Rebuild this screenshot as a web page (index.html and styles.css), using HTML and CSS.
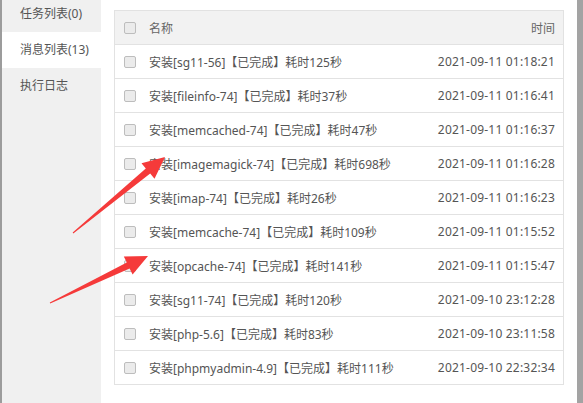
FILE: index.html
```html
<!DOCTYPE html>
<html lang="zh-CN">
<head>
<meta charset="utf-8">
<link rel="stylesheet" href="styles.css">
</head>
<body>
<div class="page">
  <div class="edge-left"></div>
  <nav class="sidebar">
    <ul class="menu">
      <li class="menu-item">任务列表(0)</li>
      <li class="menu-item active">消息列表(13)</li>
      <li class="menu-item">执行日志</li>
    </ul>
  </nav>
  <main class="main">
    <table class="msg-table">
      <thead>
        <tr><th class="c-check"><span class="cb"></span></th><th class="c-name">名称</th><th class="c-time">时间</th></tr>
      </thead>
      <tbody>
        <tr><td class="c-check"><span class="cb"></span></td><td class="c-name">安装[sg11-56]【已完成】耗时125秒</td><td class="c-time">2021-09-11 01:18:21</td></tr>
        <tr><td class="c-check"><span class="cb"></span></td><td class="c-name">安装[fileinfo-74]【已完成】耗时37秒</td><td class="c-time">2021-09-11 01:16:41</td></tr>
        <tr><td class="c-check"><span class="cb"></span></td><td class="c-name">安装[memcached-74]【已完成】耗时47秒</td><td class="c-time">2021-09-11 01:16:37</td></tr>
        <tr><td class="c-check"><span class="cb"></span></td><td class="c-name">安装[imagemagick-74]【已完成】耗时698秒</td><td class="c-time">2021-09-11 01:16:28</td></tr>
        <tr><td class="c-check"><span class="cb"></span></td><td class="c-name">安装[imap-74]【已完成】耗时26秒</td><td class="c-time">2021-09-11 01:16:23</td></tr>
        <tr><td class="c-check"><span class="cb"></span></td><td class="c-name">安装[memcache-74]【已完成】耗时109秒</td><td class="c-time">2021-09-11 01:15:52</td></tr>
        <tr><td class="c-check"><span class="cb"></span></td><td class="c-name">安装[opcache-74]【已完成】耗时141秒</td><td class="c-time">2021-09-11 01:15:47</td></tr>
        <tr><td class="c-check"><span class="cb"></span></td><td class="c-name">安装[sg11-74]【已完成】耗时120秒</td><td class="c-time">2021-09-10 23:12:28</td></tr>
        <tr><td class="c-check"><span class="cb"></span></td><td class="c-name">安装[php-5.6]【已完成】耗时83秒</td><td class="c-time">2021-09-10 23:11:58</td></tr>
        <tr><td class="c-check"><span class="cb"></span></td><td class="c-name">安装[phpmyadmin-4.9]【已完成】耗时111秒</td><td class="c-time">2021-09-10 22:32:34</td></tr>
      </tbody>
    </table>
  </main>
  <div class="edge-right"></div>
  <svg class="arrows" width="583" height="403" viewBox="0 0 583 403">
    <polygon points="72.7,232.6 145.8,168.4 141.5,163.2 165,157 154.5,178.8 150.2,173.6 73.3,233.4" />
    <polygon points="49.8,302.5 126.8,262.6 123.8,256.4 148,256 132.6,274.6 129.6,268.4 50.2,303.5" />
  </svg>
</div>
</body>
</html>
```
FILE: styles.css
```css
html, body {
  margin: 0;
  padding: 0;
  background: #fff;
}
body {
  font-family: "Noto Sans", "Noto Sans CJK SC", sans-serif;
  font-size: 12px;
  color: #555;
  overflow: hidden;
}
.page {
  position: relative;
  display: flex;
  width: 583px;
  height: 403px;
  overflow: hidden;
}
.edge-left {
  width: 2px;
  flex: none;
  background: #9c9c9c;
}
.sidebar {
  width: 99px;
  flex: none;
  background: #f0f0f0;
}
.menu {
  list-style: none;
  margin: -4px 0 0 0;
  padding: 0;
}
.menu-item {
  height: 36px;
  line-height: 36px;
  padding-left: 18px;
  color: #555;
  font-size: 12px;
}
.menu-item.active {
  background: #fff;
}
.main {
  flex: 1;
  padding: 10px 13px 0 13px;
}
.msg-table {
  width: 450px;
  border-collapse: collapse;
  table-layout: fixed;
}
.msg-table th,
.msg-table td {
  height: 33px;
  padding: 0;
  border-top: 1px solid #e2e2e2;
  border-bottom: 1px solid #e2e2e2;
  font-weight: normal;
  white-space: nowrap;
  vertical-align: middle;
}
.msg-table th {
  background: #f2f2f2;
  color: #666;
}
.msg-table tr > :first-child { border-left: 1px solid #e2e2e2; }
.msg-table tr > :last-child { border-right: 1px solid #e2e2e2; }
.c-check {
  width: 25px;
  padding-left: 9px !important;
  text-align: left;
}
.c-name {
  text-align: left;
}
.c-time {
  width: 140px;
  text-align: right;
  padding-right: 8px !important;
}
td.c-time {
  letter-spacing: 0.2px;
}
.cb {
  display: block;
  width: 10px;
  height: 10px;
  border: 1px solid #bdbdbd;
  border-radius: 2px;
  background: #ebebeb;
}
.edge-right {
  width: 6px;
  flex: none;
  background: #a3a3a3;
}
.arrows {
  position: absolute;
  left: 0;
  top: 0;
  pointer-events: none;
}
.arrows polygon {
  fill: #f53a3a;
}
```
